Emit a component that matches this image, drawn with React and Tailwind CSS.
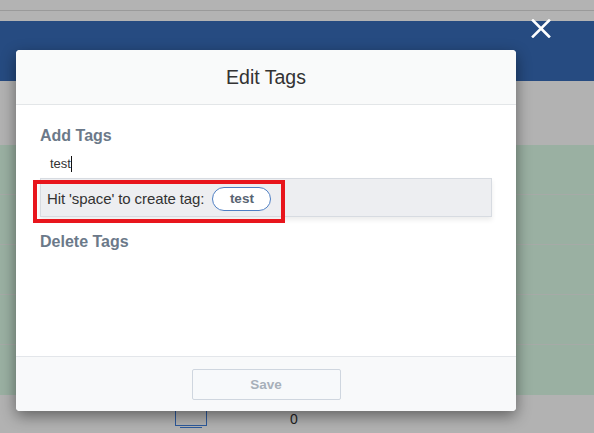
import React from "react";

export default function App() {
  const font = { fontFamily: '"Liberation Sans", Arial, sans-serif' };
  return (
    <div className="relative w-[594px] h-[433px] overflow-hidden bg-[#b2b2b2]" style={font}>
      {/* background page */}
      <div className="flex flex-col">
        <div className="h-[10px] bg-[#b3b3b3]" />
        <div className="h-[1px] bg-[#9a9a9a]" />
        <div className="h-[10px] bg-[#b3b3b3]" />
        <div className="h-[60px] bg-[#264b81]" />
        <div className="h-[64px] bg-[#b2b2b2]" />
        <div className="flex flex-col bg-[#9ab0a2]">
          <div className="h-[50px] border-b border-[#a6aaa7]" />
          <div className="h-[50px] border-b border-[#a6aaa7]" />
          <div className="h-[50px] border-b border-[#a6aaa7]" />
          <div className="h-[50px] border-b border-[#a6aaa7]" />
          <div className="h-[50px]" />
        </div>
        <div className="flex items-start h-[38px] bg-[#b2b2b2]">
          <div className="ml-[175px] mt-[4px] flex flex-col">
            <div className="w-[32px] h-[27px] border border-[#2d5a9c]" />
            <div className="ml-[5px] mt-[1px] w-[22px] h-[1px] bg-[#2d5a9c]" />
          </div>
          <div className="ml-[83px] mt-[16px] text-[14px] leading-[16px] text-[#222]">0</div>
        </div>
      </div>

      {/* close X */}
      <svg className="absolute left-[531px] top-[19px]" width="20" height="19" viewBox="0 0 20 19">
        <path d="M2 1.5 L18 17.5 M18 1.5 L2 17.5" stroke="#ffffff" strokeWidth="2.6" strokeLinecap="square" />
      </svg>

      {/* modal */}
      <div className="absolute left-[16px] top-[50px] w-[500px] h-[361px] flex flex-col bg-white rounded-[4px] shadow-[0_5px_15px_rgba(0,0,0,0.45)] overflow-hidden">
        <div className="h-[55px] flex items-center justify-center bg-[#f9fafa] border-b border-[#e3e6e8]">
          <span className="text-[19.5px] text-[#333] leading-[22px]">Edit Tags</span>
        </div>
        <div className="flex-1 flex flex-col px-[24px] pt-[22px]">
          <div className="text-[16px] leading-[18px] font-bold text-[#6b7989]">Add Tags</div>
          <div className="mt-[10px] pl-[10px] h-[18px] flex items-center">
            <span className="text-[13px] leading-[16px] text-[#333]">test</span>
            <span className="w-[1px] h-[16px] bg-[#111]" />
          </div>
          <div className="mt-[5px] h-[39px] w-[452px] flex items-center pl-[6px] bg-[#edeef1] border border-[#d7dbe1] shadow-[0_3px_5px_rgba(0,0,0,0.08)]">
            <span className="text-[15px] leading-[18px] text-[#333] mt-[3px] tracking-[-0.1px]">Hit 'space' to create tag:</span>
            <span className="ml-[8px] mt-[3px] w-[59px] h-[24px] flex items-center justify-center rounded-full bg-white border-[1.5px] border-[#4f7fc3] text-[13.5px] font-bold text-[#596472]">test</span>
          </div>
          <div className="mt-[16px] text-[16px] leading-[18px] font-bold text-[#6b7989]">Delete Tags</div>
        </div>
        <div className="h-[55px] flex items-center justify-center bg-[#f8f9fa] border-t border-[#e3e6ea]">
          <div className="w-[149px] h-[31px] flex items-center justify-center border border-[#cfd6df] rounded-[2px] bg-[#f7f9fb] text-[13.5px] font-bold text-[#a7b0ba] pt-[2px]">Save</div>
        </div>
      </div>

      {/* red annotation box */}
      <div className="absolute left-[33px] top-[180px] w-[252px] h-[43px] border-[4px] border-[#e8151c]" />
    </div>
  );
}
